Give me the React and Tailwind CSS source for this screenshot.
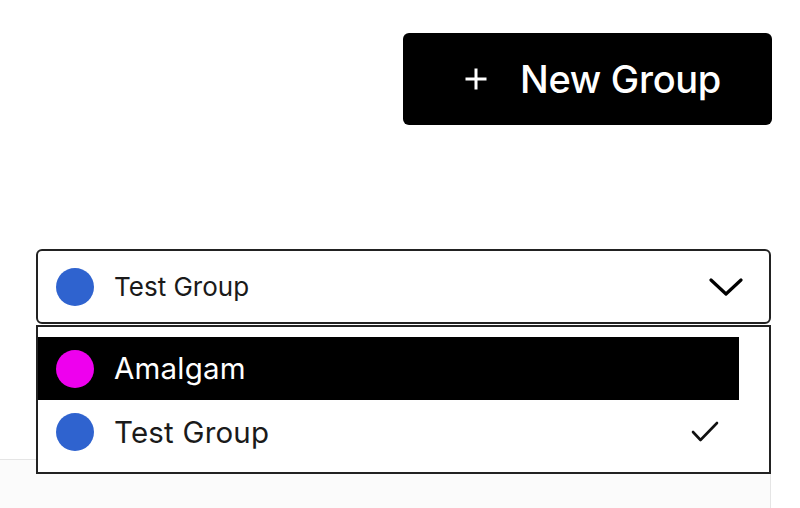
import React from "react";

function Chevron() {
  return (
    <svg width="34" height="20" viewBox="0 0 34 20" fill="none">
      <path d="M2 3 L17 17 L32 3" stroke="#000" strokeWidth="3.2" strokeLinecap="round" strokeLinejoin="round" />
    </svg>
  );
}

function Check() {
  return (
    <svg width="28" height="24" viewBox="0 0 28 24" fill="none">
      <path d="M2 12 L9.5 20 L26 3" stroke="#111" strokeWidth="2.6" strokeLinecap="round" strokeLinejoin="round" />
    </svg>
  );
}

export default function App() {
  return (
    <div className="relative w-[800px] h-[508px] overflow-hidden bg-white" style={{ fontFamily: "Inter, 'Noto Sans', sans-serif" }}>
      <div className="flex justify-end pt-[33px] pr-[28px]">
        <button className="flex h-[92px] w-[369px] items-center rounded-[6px] bg-black pl-[61px] text-white">
          <svg width="24" height="24" viewBox="0 0 24 24" className="mr-[32px]">
            <path d="M12 1.5 V22.5 M1.5 12 H22.5" stroke="#fff" strokeWidth="3" />
          </svg>
          <span className="text-[38px] font-medium leading-none tracking-[-0.3px]">New Group</span>
        </button>
      </div>

      <div className="mt-[124px] ml-[36px] flex h-[75px] w-[735px] items-center rounded-[6px] border-2 border-[#222] pl-[18px] pr-[26px]">
        <span className="h-[38px] w-[38px] rounded-full bg-[#2f63cf]" />
        <span className="ml-[20px] flex-1 text-[26px] text-[#1a1a1a]">Test Group</span>
        <Chevron />
      </div>

      <div className="mt-[135px] h-[60px] w-[771px] border-t border-r border-[#e5e5e5] bg-[#fbfbfb]" />

      <div className="absolute left-[36px] top-[325px] h-[149px] w-[735px] border-2 border-[#222] bg-white pt-[10px] pr-[30px]">
        <div className="flex h-[63px] items-center bg-black pl-[18px] text-white">
          <span className="h-[38px] w-[38px] rounded-full bg-[#ee00ee]" />
          <span className="ml-[20px] text-[29.5px] tracking-[0.2px]">Amalgam</span>
        </div>
        <div className="flex h-[64px] items-center pl-[18px] pr-[20px]">
          <span className="h-[38px] w-[38px] rounded-full bg-[#2f63cf]" />
          <span className="ml-[20px] flex-1 text-[29.5px] tracking-[0.2px] text-[#1a1a1a]">Test Group</span>
          <Check />
        </div>
      </div>
    </div>
  );
}
